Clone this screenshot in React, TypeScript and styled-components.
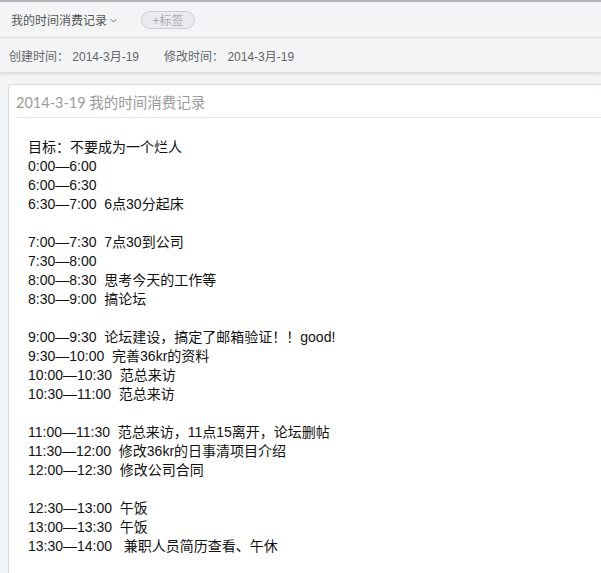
import React from 'react';
import styled, { createGlobalStyle } from 'styled-components';

const GlobalStyle = createGlobalStyle`
  html, body {
    margin: 0;
    padding: 0;
    background: #f3f4f6;
    font-family: "Liberation Sans", "Noto Sans CJK SC", sans-serif;
    overflow: hidden;
  }
`;

const Page = styled.div`
  width: 601px;
  height: 573px;
  overflow: hidden;
  background: #f3f4f6;
  border-top: 2px solid #b4b5b8;
  box-sizing: border-box;
`;

const Header = styled.div`
  background: #f3f4f6;
  box-shadow: 0 2px 3px rgba(0, 0, 0, 0.12);
  position: relative;
  z-index: 1;
`;

const TitleRow = styled.div`
  height: 35px;
  display: flex;
  align-items: center;
  padding-left: 11px;
  border-bottom: 1px solid #dcdddf;
`;

const NoteName = styled.span`
  font-size: 12px;
  color: #555;
  display: flex;
  align-items: center;
`;

const Chevron = styled.svg`
  margin-left: 3px;
  margin-top: 1px;
`;

const TagPill = styled.span`
  margin-left: 24px;
  height: 18px;
  width: 54px;
  box-sizing: border-box;
  border: 1px solid #c9ccd1;
  border-radius: 9px;
  background: #e9ebee;
  color: #a9abaf;
  font-size: 12px;
  display: flex;
  align-items: center;
  justify-content: center;
`;

const MetaRow = styled.div`
  height: 34px;
  display: flex;
  align-items: center;
  padding-left: 9px;
  gap: 25px;
  font-size: 12px;
  color: #666;
`;

const Meta = styled.span`
  white-space: pre;
`;

const Body = styled.div`
  padding: 12px 0 0 8px;
`;

const Card = styled.div`
  background: #fff;
  border: 1px solid #dadbdd;
  border-right: none;
  border-radius: 3px 0 0 0;
  height: 500px;
  padding-left: 7px;
`;

const CardTitle = styled.div`
  height: 31px;
  display: flex;
  align-items: center;
  padding-top: 1px;
  font-size: 14.5px;
  color: #9a9a9a;
  font-family: "Lato", "Noto Sans CJK SC", sans-serif;
  border-bottom: 1px solid #e3e3e3;
`;

const Content = styled.div`
  padding: 20px 0 0 12px;
  font-size: 14px;
  line-height: 19px;
  color: #111;
`;

const Line = styled.div`
  height: 19px;
  white-space: pre;
`;

const lines = [
  '目标：不要成为一个烂人',
  '0:00—6:00',
  '6:00—6:30',
  '6:30—7:00  6点30分起床',
  '',
  '7:00—7:30  7点30到公司',
  '7:30—8:00',
  '8:00—8:30  思考今天的工作等',
  '8:30—9:00  搞论坛',
  '',
  '9:00—9:30  论坛建设，搞定了邮箱验证！！good!',
  '9:30—10:00  完善36kr的资料',
  '10:00—10:30  范总来访',
  '10:30—11:00  范总来访',
  '',
  '11:00—11:30  范总来访，11点15离开，论坛删帖',
  '11:30—12:00  修改36kr的日事清项目介绍',
  '12:00—12:30  修改公司合同',
  '',
  '12:30—13:00  午饭',
  '13:00—13:30  午饭',
  '13:30—14:00   兼职人员简历查看、午休',
];

export default function App() {
  return (
    <Page>
      <GlobalStyle />
      <Header>
        <TitleRow>
          <NoteName>
            我的时间消费记录
            <Chevron width="7" height="5" viewBox="0 0 7 5">
              <path d="M0.5 1 L3.5 4 L6.5 1" fill="none" stroke="#777" strokeWidth="1" />
            </Chevron>
          </NoteName>
          <TagPill>+标签</TagPill>
        </TitleRow>
        <MetaRow>
          <Meta>创建时间： 2014-3月-19</Meta>
          <Meta>修改时间： 2014-3月-19</Meta>
        </MetaRow>
      </Header>
      <Body>
        <Card>
          <CardTitle>2014-3-19 我的时间消费记录</CardTitle>
          <Content>
            {lines.map((l, i) => (
              <Line key={i}>{l}</Line>
            ))}
          </Content>
        </Card>
      </Body>
    </Page>
  );
}
